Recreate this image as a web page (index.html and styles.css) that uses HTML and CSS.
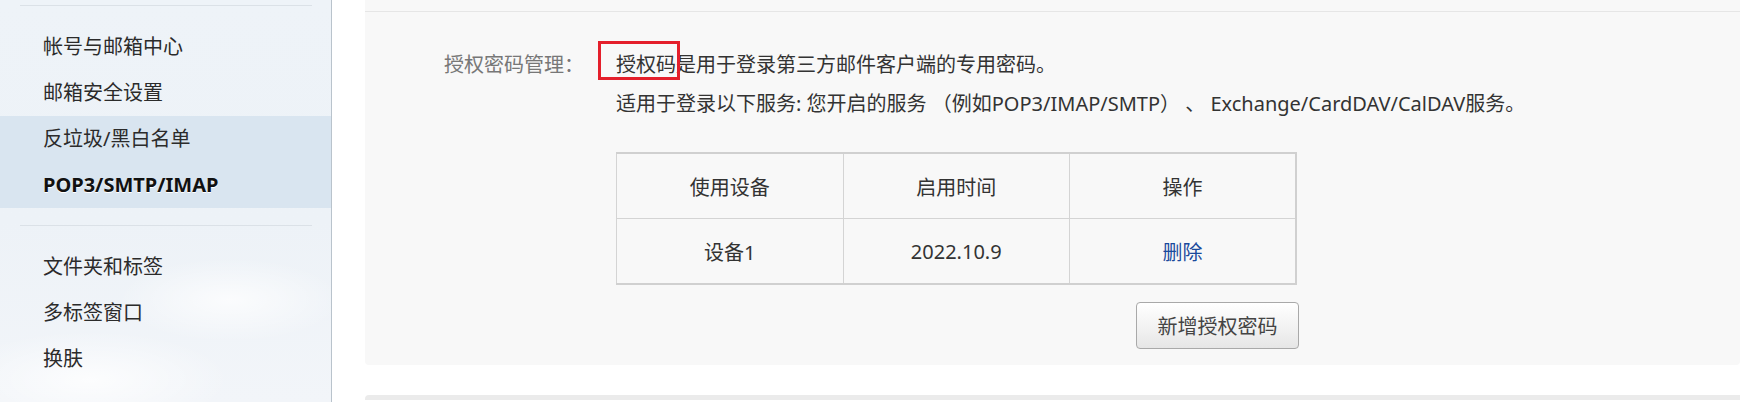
FILE: index.html
```html
<!DOCTYPE html>
<html lang="zh-CN">
<head>
<meta charset="utf-8">
<title>设置 - POP3/SMTP/IMAP</title>
<link rel="stylesheet" href="styles.css">
</head>
<body>
<div class="page">
  <aside class="sidebar">
    <div class="divider"></div>
    <ul class="menu">
      <li class="item">帐号与邮箱中心</li>
      <li class="item">邮箱安全设置</li>
      <li class="item hl">反垃圾/黑白名单</li>
      <li class="item hl active">POP3/SMTP/IMAP</li>
    </ul>
    <div class="divider"></div>
    <ul class="menu">
      <li class="item">文件夹和标签</li>
      <li class="item">多标签窗口</li>
      <li class="item">换肤</li>
    </ul>
  </aside>
  <main class="main">
    <section class="panel">
      <div class="panel-top"></div>
      <div class="panel-body">
        <div class="label">授权密码管理：</div>
        <div class="content">
          <p class="line"><span class="mark">授权码</span>是用于登录第三方邮件客户端的专用密码。</p>
          <p class="line">适用于登录以下服务: 您开启的服务 （例如POP3/IMAP/SMTP） 、 Exchange/CardDAV/CalDAV服务。</p>
          <table class="devices">
            <thead>
              <tr><th>使用设备</th><th>启用时间</th><th>操作</th></tr>
            </thead>
            <tbody>
              <tr><td>设备1</td><td>2022.10.9</td><td><a class="del" href="#">删除</a></td></tr>
            </tbody>
          </table>
          <div class="actions">
            <button class="btn" type="button">新增授权密码</button>
          </div>
        </div>
      </div>
    </section>
    <section class="panel next"></section>
  </main>
</div>
</body>
</html>
```

FILE: styles.css
```css
html, body {
  margin: 0;
  padding: 0;
  background: #ffffff;
}

body {
  font-family: "Noto Sans", "Noto Sans CJK SC", sans-serif;
  font-size: 20px;
  color: #333333;
  overflow: hidden;
}

.page {
  display: flex;
  height: 402px;
  overflow: hidden;
}

.sidebar {
  width: 332px;
  flex: 0 0 332px;
  border-right: 1px solid #b9c3cc;
  padding-top: 5px;
  box-sizing: border-box;
  background:
    radial-gradient(ellipse 160px 60px at 230px 300px, rgba(255,255,255,0.75), rgba(255,255,255,0) 70%),
    radial-gradient(ellipse 200px 70px at 90px 380px, rgba(255,255,255,0.8), rgba(255,255,255,0) 70%),
    linear-gradient(180deg, #eef3f8 0%, #edf2f7 55%, #f2f5f9 100%);
}

.divider {
  height: 1px;
  background: #dbe1e7;
  margin: 0 19px 0 20px;
}

.menu {
  list-style: none;
  margin: 18px 0 17px;
  padding: 0;
}

.item {
  height: 46px;
  line-height: 46px;
  padding-left: 43px;
  color: #2b2b2b;
  white-space: nowrap;
}

.item.hl {
  background: #d9e5f0;
}

.item.active {
  font-weight: 700;
  color: #111111;
  text-shadow: 0 1px 0 #ffffff;
}

.main {
  flex: 1;
  margin-left: 33px;
  display: flex;
  flex-direction: column;
  gap: 30px;
}

.panel {
  background: #f8f8f8;
  border-radius: 0 0 4px 4px;
}

.panel-top {
  height: 11px;
  border-bottom: 1px solid #e6e6e6;
}

.panel-body {
  display: flex;
  padding: 33px 0 16px 79px;
}

.label {
  width: 172px;
  flex: 0 0 172px;
  line-height: 39px;
  color: #777777;
  white-space: nowrap;
}

.content {
  display: flex;
  flex-direction: column;
  width: 681px;
}

.line {
  margin: 0;
  line-height: 39px;
  white-space: nowrap;
}

.mark {
  position: relative;
}

.mark::after {
  content: "";
  position: absolute;
  left: -18px;
  top: -10px;
  width: 76px;
  height: 33px;
  border: 3px solid #e41f2b;
  pointer-events: none;
}

.devices {
  margin-top: 29px;
  width: 681px;
  border-collapse: collapse;
  table-layout: fixed;
  border-top: 2px solid #d0d0d0;
  border-bottom: 2px solid #d0d0d0;
  border-left: 1px solid #d0d0d0;
  border-right: 2px solid #d0d0d0;
}

.devices th,
.devices td {
  border: 1px solid #d4d4d4;
  text-align: center;
  font-weight: 400;
  color: #333333;
  padding: 0;
}

.devices th {
  height: 64px;
}

.devices td {
  height: 64px;
}

.del {
  color: #1a4a9c;
  text-decoration: none;
}

.actions {
  display: flex;
  justify-content: flex-end;
  margin-top: 17px;
}

.btn {
  width: 163px;
  height: 47px;
  font-family: inherit;
  font-size: 20px;
  color: #444444;
  border: 1px solid #a9a9a9;
  border-radius: 4px;
  background: linear-gradient(180deg, #ffffff 0%, #f2f2f2 55%, #e6e6e6 100%);
  padding: 0;
  margin-right: -2px;
}

.panel.next {
  height: 5px;
  flex: 0 0 5px;
  background: #ebebeb;
  border-radius: 4px 0 0 0;
}
```
